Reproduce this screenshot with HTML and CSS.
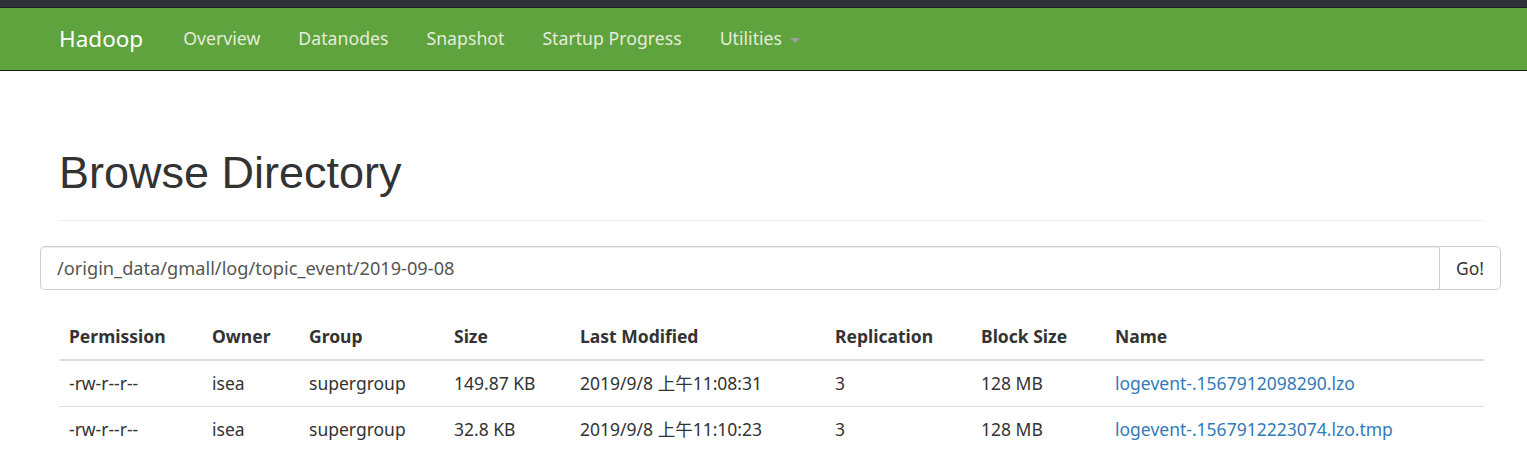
FILE: index.html
```html
<!DOCTYPE html>
<html lang="en">
<head>
<meta charset="utf-8">
<title>Browsing HDFS</title>
<link rel="stylesheet" href="styles.css">
</head>
<body>
<div class="topbar"></div>
<header class="navbar">
  <div class="nav-inner">
    <a class="brand" href="#">Hadoop</a>
    <nav class="nav-links">
      <a href="#">Overview</a>
      <a href="#">Datanodes</a>
      <a href="#">Snapshot</a>
      <a href="#">Startup Progress</a>
      <a href="#" class="dropdown">Utilities <span class="caret"></span></a>
    </nav>
  </div>
</header>
<main class="page">
  <div class="page-header">
    <h1>Browse Directory</h1>
  </div>
  <form class="input-group">
    <input class="path-input" type="text" value="/origin_data/gmall/log/topic_event/2019-09-08">
    <button class="go-btn" type="button">Go!</button>
  </form>
  <div class="table-wrap">
    <table class="listing">
      <colgroup>
        <col class="c1"><col class="c2"><col class="c3"><col class="c4">
        <col class="c5"><col class="c6"><col class="c7"><col class="c8">
      </colgroup>
      <thead>
        <tr>
          <th>Permission</th><th>Owner</th><th>Group</th><th>Size</th>
          <th>Last Modified</th><th>Replication</th><th>Block Size</th><th>Name</th>
        </tr>
      </thead>
      <tbody>
        <tr>
          <td>-rw-r--r--</td><td>isea</td><td>supergroup</td><td>149.87 KB</td>
          <td>2019/9/8 上午11:08:31</td><td>3</td><td>128 MB</td>
          <td><a href="#">logevent-.1567912098290.lzo</a></td>
        </tr>
        <tr>
          <td>-rw-r--r--</td><td>isea</td><td>supergroup</td><td>32.8 KB</td>
          <td>2019/9/8 上午11:10:23</td><td>3</td><td>128 MB</td>
          <td><a href="#">logevent-.1567912223074.lzo.tmp</a></td>
        </tr>
      </tbody>
    </table>
  </div>
</main>
</body>
</html>
```

FILE: styles.css
```css
* { box-sizing: border-box; }
html, body { margin: 0; padding: 0; }
body {
  font-family: "Noto Sans", "Noto Sans CJK SC", sans-serif;
  font-size: 17.5px;
  color: #333;
  background: #fff;
}
a { text-decoration: none; }

.topbar {
  height: 8px;
  background: #2f3236;
  border-bottom: 1px solid #1e2023;
}
.navbar {
  height: 63px;
  background: #5fa33e;
  border-bottom: 1px solid #161a14;
}
.nav-inner {
  display: flex;
  align-items: center;
  height: 100%;
  padding-left: 59px;
}
.brand {
  color: #fff;
  font-size: 22.5px;
  padding-right: 21px;
  line-height: 1;
}
.nav-links {
  display: flex;
  align-items: center;
}
.nav-links a {
  color: #e4ecd9;
  padding: 0 19px;
  line-height: 1;
  font-size: 17.7px;
}
.caret {
  display: inline-block;
  width: 0;
  height: 0;
  margin-left: 3px;
  vertical-align: middle;
  border-top: 5px solid #a09aa8;
  border-left: 5px solid transparent;
  border-right: 5px solid transparent;
}

.page {
  padding: 0 26px 0 40px;
}
.page-header {
  margin: 0 17px 0 19px;
  padding-top: 77px;
  padding-bottom: 22px;
  border-bottom: 1px solid #eee;
}
.page-header h1 {
  margin: 0;
  font-family: "Liberation Sans", Arial, sans-serif;
  font-weight: 400;
  font-size: 45px;
  line-height: 1.1;
  color: #333;
}

.input-group {
  display: flex;
  margin: 25px 0 0 0;
  height: 44px;
}
.path-input {
  flex: 1;
  height: 44px;
  border: 1px solid #ccc;
  border-right: 0;
  border-radius: 5px 0 0 5px;
  padding: 0 16px;
  font-family: "Noto Sans", sans-serif;
  font-size: 18.2px;
  color: #555;
  outline: none;
  box-shadow: inset 0 1px 1px rgba(0,0,0,.075);
}
.go-btn {
  width: 62px;
  height: 44px;
  border: 1px solid #ccc;
  border-radius: 0 5px 5px 0;
  background: #fff;
  font-family: "Noto Sans", sans-serif;
  font-size: 17.5px;
  color: #333;
  padding: 0;
}

.table-wrap {
  padding: 0 17px 0 19px;
  margin-top: 24px;
}
.listing {
  width: 100%;
  border-collapse: collapse;
  table-layout: fixed;
}
.c1 { width: 143px; }
.c2 { width: 97px; }
.c3 { width: 145px; }
.c4 { width: 126px; }
.c5 { width: 255px; }
.c6 { width: 146px; }
.c7 { width: 134px; }
.c8 { width: auto; }
.listing th, .listing td {
  text-align: left;
  padding: 10px;
  line-height: 25px;
  white-space: nowrap;
  vertical-align: top;
}
.listing th {
  font-weight: 700;
  border-bottom: 2px solid #ddd;
}
.listing td {
  border-top: 1px solid #ddd;
}
.listing tbody tr:first-child td { border-top: 0; }
.listing td a { color: #337ab7; }
```
